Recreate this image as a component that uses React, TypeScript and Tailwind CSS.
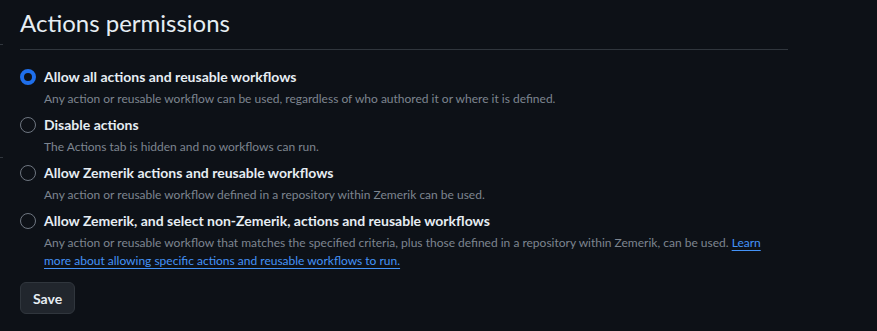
import React, { useState } from 'react';

interface Option {
  id: string;
  label: string;
  description: string;
  link?: string;
}

const options: Option[] = [
  {
    id: 'all',
    label: 'Allow all actions and reusable workflows',
    description: 'Any action or reusable workflow can be used, regardless of who authored it or where it is defined.',
  },
  {
    id: 'disable',
    label: 'Disable actions',
    description: 'The Actions tab is hidden and no workflows can run.',
  },
  {
    id: 'local',
    label: 'Allow Zemerik actions and reusable workflows',
    description: 'Any action or reusable workflow defined in a repository within Zemerik can be used.',
  },
  {
    id: 'selected',
    label: 'Allow Zemerik, and select non-Zemerik, actions and reusable workflows',
    description:
      'Any action or reusable workflow that matches the specified criteria, plus those defined in a repository within Zemerik, can be used.',
    link: 'Learn more about allowing specific actions and reusable workflows to run.',
  },
];

const Radio: React.FC<{ checked: boolean }> = ({ checked }) => (
  <span
    className={`mt-[2px] w-4 h-4 shrink-0 rounded-full ${
      checked ? 'border-[4px] border-[#1f6feb] bg-[#0d1117]' : 'border border-[#6e7681] bg-[#0d1117]'
    }`}
  />
);

export default function App() {
  const [selected, setSelected] = useState('all');

  return (
    <div
      className="relative w-[877px] h-[331px] bg-[#0d1117] text-[#e6edf3] overflow-hidden"
      style={{ fontFamily: 'Lato, "Liberation Sans", sans-serif' }}
    >
      {/* stray edge marks from the sidebar */}
      <div className="absolute left-0 top-[44px] w-[3px] h-px bg-[#30363d]" />
      <div className="absolute left-0 top-[157px] w-[3px] h-px bg-[#30363d]" />

      <div className="pl-5 w-[788px]">
        <h2 className="pt-[5px] pb-[8px] text-[24px] leading-[36px] font-normal border-b border-[#30363d]">
          Actions permissions
        </h2>

        <div className="pt-[17px] flex flex-col gap-[7px]">
          {options.map((opt) => (
            <label key={opt.id} className="flex gap-2 cursor-pointer" onClick={() => setSelected(opt.id)}>
              <Radio checked={selected === opt.id} />
              <div className="flex flex-col">
                <span className="text-[14px] leading-[20px] font-bold">{opt.label}</span>
                <p className="mt-[3px] text-[12px] leading-[18px] text-[#7d8590] max-w-[724px]">
                  {opt.description}
                  {opt.link && (
                    <>
                      {' '}
                      <a className="text-[#4493f8] underline underline-offset-[3px]" href="#">
                        {opt.link}
                      </a>
                    </>
                  )}
                </p>
              </div>
            </label>
          ))}
        </div>

        <button className="mt-[12px] h-8 px-3 rounded-md bg-[#21262d] border border-[#30363d] text-[14px] font-bold text-[#e6edf3]">
          Save
        </button>
      </div>
    </div>
  );
}
